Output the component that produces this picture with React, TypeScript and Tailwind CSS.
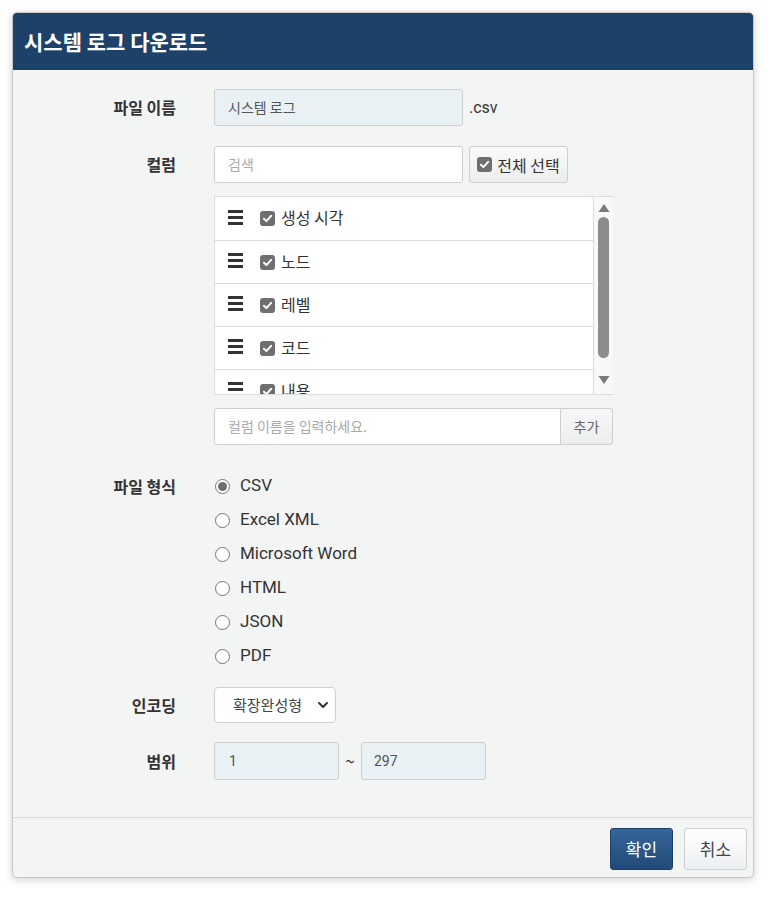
import React from "react";

const font = { fontFamily: '"Noto Sans CJK KR", Roboto, "Noto Sans", sans-serif' };

function Check({ size = 14 }: { size?: number }) {
  return (
    <span
      className="inline-flex items-center justify-center rounded-[3px] bg-[#6f6f6f] shrink-0"
      style={{ width: size, height: size }}
    >
      <svg width={size - 4} height={size - 4} viewBox="0 0 10 10">
        <path d="M1.8 5.2 L4 7.4 L8.3 2.6" stroke="white" strokeWidth="1.8" fill="none" strokeLinecap="round" strokeLinejoin="round" />
      </svg>
    </span>
  );
}

function Burger() {
  return (
    <span className="flex flex-col gap-[3px] w-[15px]">
      <span className="h-[3px] bg-[#333] block" />
      <span className="h-[3px] bg-[#333] block" />
      <span className="h-[3px] bg-[#333] block" />
    </span>
  );
}

function Row({ label, children, className = "" }: { label: string; children: React.ReactNode; className?: string }) {
  return (
    <div className={"flex " + className}>
      <div className="w-[163px] shrink-0 text-right text-[16px] font-bold text-[#333] leading-[37px]">{label}</div>
      <div className="ml-[38px] flex-1">{children}</div>
    </div>
  );
}

function Radio({ label, checked }: { label: string; checked?: boolean }) {
  return (
    <div className="flex items-center h-[34px]">
      <span className="w-[15px] h-[15px] rounded-full border border-[#767676] bg-white flex items-center justify-center ml-[1px]">
        {checked && <span className="w-[9px] h-[9px] rounded-full bg-[#6f6f6f] block" />}
      </span>
      <span className="ml-[10px] text-[17px] text-[#333]" style={{ fontFamily: 'Roboto, "Noto Sans CJK KR", sans-serif' }}>{label}</span>
    </div>
  );
}

export default function App() {
  const cols = ["생성 시각", "노드", "레벨", "코드", "내용"];
  return (
    <div className="bg-white w-[777px] h-[900px] pt-[12px] pl-[12px]" style={font}>
      <div className="w-[742px] border border-[#c8c8c8] rounded-[5px] overflow-hidden bg-[#f3f4f4] shadow-[0_2px_8px_rgba(0,0,0,0.18)]">
        <div className="h-[57px] bg-[#1d4169] flex items-center pl-[11px]">
          <span className="text-white text-[21px] font-bold">시스템 로그 다운로드</span>
        </div>
        <div className="pt-[19px] pb-[37px]">
          <Row label="파일 이름">
            <div className="flex items-center">
              <div className="w-[249px] h-[37px] border border-[#cfcfcf] rounded-[3px] bg-[#e9f1f4] flex items-center px-[13px] text-[14px] text-[#555]">
                시스템 로그
              </div>
              <span className="ml-[6px] text-[16px] text-[#333]" style={{ fontFamily: 'Roboto, sans-serif' }}>.csv</span>
            </div>
          </Row>
          <Row label="컬럼" className="mt-[20px]">
            <div className="flex items-center">
              <div className="w-[249px] h-[37px] border border-[#cfcfcf] rounded-[3px] bg-white flex items-center px-[13px] text-[14px] text-[#aaa]">
                검색
              </div>
              <div className="ml-[6px] w-[99px] h-[37px] border border-[#cfcfcf] rounded-[3px] bg-gradient-to-b from-[#fafafa] to-[#eceeee] flex items-center justify-center gap-[5px] text-[16px] text-[#333]">
                <Check size={15} />
                전체 선택
              </div>
            </div>
          </Row>
          <div className="ml-[201px] mt-[13px] w-[399px] h-[199px] flex border-t border-b border-[#dcdcdc]">
            <div className="flex-1 bg-white border-l border-r border-[#dcdcdc] rounded-tr-[4px] overflow-hidden">
              {cols.map((c, i) => (
                <div key={c} className={"h-[43px] flex items-center pb-[3px] " + (i > 0 ? "border-t border-[#dcdcdc]" : "")}>
                  <span className="ml-[13px]"><Burger /></span>
                  <span className="ml-[17px]"><Check size={15} /></span>
                  <span className="ml-[6px] text-[16px] text-[#333]">{c}</span>
                </div>
              ))}
            </div>
            <div className="w-[19px] bg-[#f8f8f8] flex flex-col items-center">
              <svg width="12" height="10" viewBox="0 0 12 10" className="mt-[6px]"><path d="M6 1 L11.5 9 L0.5 9 Z" fill="#7a7a7a" /></svg>
              <div className="mt-[4px] w-[11px] h-[141px] rounded-full bg-[#8c8c8c]" />
              <svg width="12" height="10" viewBox="0 0 12 10" className="mt-[17px]"><path d="M0.5 1 L11.5 1 L6 9 Z" fill="#7a7a7a" /></svg>
            </div>
          </div>
          <div className="ml-[201px] mt-[13px] flex">
            <div className="w-[347px] h-[37px] border border-[#cfcfcf] rounded-l-[3px] bg-white flex items-center px-[13px] text-[14px] text-[#aaa]">
              컬럼 이름을 입력하세요.
            </div>
            <div className="w-[52px] h-[37px] border border-l-0 border-[#cfcfcf] rounded-r-[3px] bg-gradient-to-b from-[#f7f7f7] to-[#eceeee] flex items-center justify-center text-[14px] text-[#666]">
              추가
            </div>
          </div>
          <div className="flex mt-[24px]">
            <div className="w-[163px] shrink-0 text-right text-[16px] font-bold text-[#333] leading-[34px]">파일 형식</div>
            <div className="ml-[38px] flex flex-col">
              <Radio label="CSV" checked />
              <Radio label="Excel XML" />
              <Radio label="Microsoft Word" />
              <Radio label="HTML" />
              <Radio label="JSON" />
              <Radio label="PDF" />
            </div>
          </div>
          <div className="flex mt-[14px] items-center">
            <div className="w-[163px] shrink-0 text-right text-[16px] font-bold text-[#333]">인코딩</div>
            <div className="ml-[38px] w-[122px] h-[36px] border border-[#cfcfcf] rounded-[4px] bg-white flex items-center justify-between pl-[18px] pr-[6px] text-[15px] text-[#444]">
              확장완성형
              <svg width="12" height="12" viewBox="0 0 12 12"><path d="M2 4 L6 8 L10 4" stroke="#333" strokeWidth="2" fill="none" strokeLinecap="round" strokeLinejoin="round" /></svg>
            </div>
          </div>
          <div className="flex mt-[19px] items-center">
            <div className="w-[163px] shrink-0 text-right text-[16px] font-bold text-[#333]">범위</div>
            <div className="ml-[38px] flex items-center">
              <div className="w-[125px] h-[38px] border border-[#cfcfcf] rounded-[3px] bg-[#e9f1f4] flex items-center px-[14px] text-[14px] text-[#555]" style={{ fontFamily: 'Roboto, sans-serif' }}>1</div>
              <span className="w-[22px] text-center text-[17px] text-[#333]">~</span>
              <div className="w-[125px] h-[38px] border border-[#cfcfcf] rounded-[3px] bg-[#e9f1f4] flex items-center px-[12px] text-[14px] text-[#555]" style={{ fontFamily: 'Roboto, sans-serif' }}>297</div>
            </div>
          </div>
        </div>
        <div className="border-t border-[#dadada] flex justify-end gap-[11px] pt-[10px] pb-[7px] pr-[6px]">
          <div className="w-[63px] h-[42px] rounded-[3px] border border-[#1d3f66] bg-gradient-to-b from-[#35669b] to-[#214a78] flex items-center justify-center text-white text-[17px]">확인</div>
          <div className="w-[63px] h-[42px] rounded-[3px] border border-[#cfcfcf] bg-gradient-to-b from-[#ffffff] to-[#eceff2] flex items-center justify-center text-[#444] text-[17px]">취소</div>
        </div>
      </div>
    </div>
  );
}
